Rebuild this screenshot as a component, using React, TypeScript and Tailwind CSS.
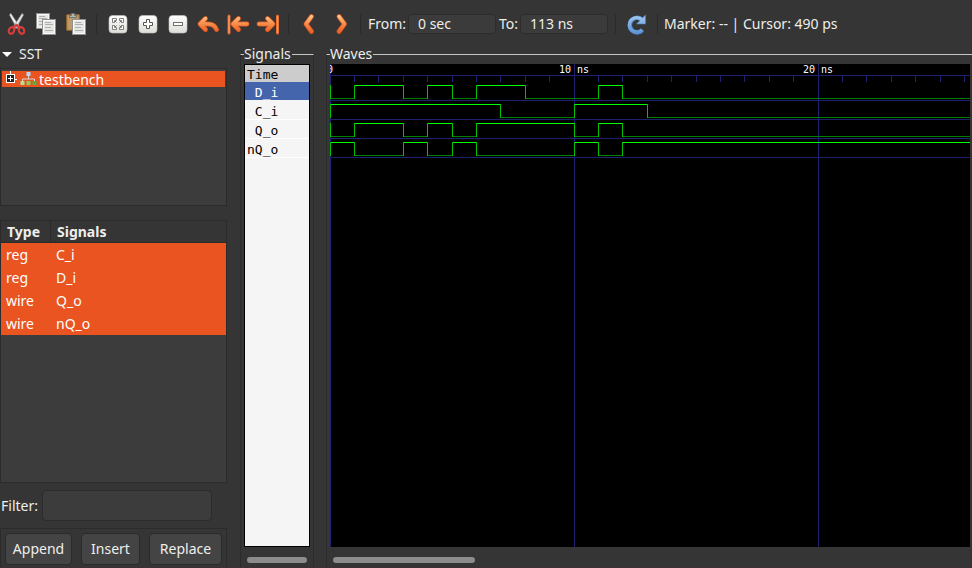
import { useEffect, useRef, useState, type ReactNode } from "react";

const NS = 24.4;
const END = 113;

type Signal = { name: string; type: string; start: 0 | 1; edges: number[] };

const traces: Signal[] = [
  { name: "D_i", type: "reg", start: 0, edges: [1, 3, 4, 5, 6, 8, 11, 12] },
  { name: "C_i", type: "reg", start: 1, edges: [7, 10, 13] },
  { name: "Q_o", type: "wire", start: 0, edges: [1, 3, 4, 5, 6, 10, 11, 12] },
  { name: "nQ_o", type: "wire", start: 1, edges: [1, 3, 4, 5, 6, 10, 11, 12] },
];

const facilities = [traces[1], traces[0], traces[2], traces[3]];

const at = (ns: number) => Math.floor(ns * NS);

function Gradients() {
  return (
    <svg className="absolute size-0" aria-hidden="true">
      <defs>
        <linearGradient id="orange" gradientUnits="userSpaceOnUse" x1="0" y1="4" x2="0" y2="21">
          <stop offset="0" stopColor="#ffc48a" />
          <stop offset="0.5" stopColor="#f58a48" />
          <stop offset="1" stopColor="#ec5a22" />
        </linearGradient>
        <linearGradient id="tile" x1="0" y1="0" x2="0" y2="1">
          <stop offset="0" stopColor="#ffffff" />
          <stop offset="1" stopColor="#dcdcd8" />
        </linearGradient>
        <linearGradient id="blue" gradientUnits="userSpaceOnUse" x1="0" y1="3" x2="0" y2="22">
          <stop offset="0" stopColor="#a4c8f0" />
          <stop offset="1" stopColor="#5a92d6" />
        </linearGradient>
      </defs>
    </svg>
  );
}

function Icon({ children }: { children: ReactNode }) {
  return (
    <svg viewBox="0 0 24 24" className="size-6" fill="none" aria-hidden="true">
      {children}
    </svg>
  );
}

function Arrow({ d }: { d: string }) {
  return (
    <g strokeLinecap="round" strokeLinejoin="round">
      <path d={d} stroke="#d9561f" strokeWidth="4.8" />
      <path d={d} stroke="url(#orange)" strokeWidth="3.4" />
    </g>
  );
}

function Page({ x, y }: { x: number; y: number }) {
  return (
    <g transform={`translate(${x} ${y})`}>
      <rect x="0.5" y="0.5" width="13" height="15" fill="#e6e6e4" stroke="#8f918d" />
      <rect x="1.5" y="1.5" width="11" height="13" stroke="#f8f8f8" />
      <path d="M3 3.5h6M3 5.5h8M3 8.5h6M3 11.5h8" stroke="#aeb0ac" />
    </g>
  );
}

function Tile({ children }: { children: ReactNode }) {
  return (
    <Icon>
      <rect x="3" y="3.5" width="18" height="17.5" rx="3.5" fill="url(#tile)" stroke="#c2c2be" strokeWidth="0.6" />
      {children}
    </Icon>
  );
}

function ToolButton({ label, children }: { label: string; children: ReactNode }) {
  return (
    <button type="button" aria-label={label} className="flex h-8 w-[30px] shrink-0 items-center justify-center">
      {children}
    </button>
  );
}

function Divider({ className }: { className: string }) {
  return <div className={`h-5 w-px shrink-0 bg-[#2a2a2a] ${className}`} />;
}

function Toolbar() {
  const field = "h-5 w-[88px] shrink-0 rounded-sm border border-[#2c2c2c] bg-[#3b3b3b] pl-[9px] outline-none";
  return (
    <header className="flex h-11 shrink-0 items-center overflow-hidden pt-1 pl-px whitespace-nowrap">
      <ToolButton label="Cut">
        <Icon>
          <path d="M5.600 3 6.800 1.400 15.400 14.400 13 16.400Z" fill="#f2f2f0" stroke="#a8aaa6" strokeWidth="0.700" />
          <path d="M19.400 3 18.200 1.400 9.600 14.400 12 16.400Z" fill="#e4e4e2" stroke="#a8aaa6" strokeWidth="0.700" />
          <path d="m9 16 3.500-3 3.500 3" stroke="#d63c3c" strokeWidth="2.400" strokeLinejoin="round" />
          <ellipse cx="7.500" cy="18.500" rx="2.600" ry="3.400" transform="rotate(24 7.500 18.500)" stroke="#d63c3c" strokeWidth="2.200" />
          <ellipse cx="17.500" cy="18.500" rx="2.600" ry="3.400" transform="rotate(-24 17.500 18.500)" stroke="#d63c3c" strokeWidth="2.200" />
        </Icon>
      </ToolButton>
      <ToolButton label="Copy">
        <Icon>
          <Page x={2} y={1} />
          <Page x={8} y={7} />
        </Icon>
      </ToolButton>
      <ToolButton label="Paste">
        <Icon>
          <rect x="2.500" y="2.500" width="13" height="16" rx="1" fill="#b78a50" stroke="#8a6330" />
          <rect x="4" y="4" width="10" height="13" fill="#c09a66" />
          <path d="M5.500 5.500V3.500H7.500V1.500h3v2h2v2Z" fill="#b4b6b2" stroke="#70726e" />
          <Page x={8} y={7} />
        </Icon>
      </ToolButton>
      <Divider className="ml-[5px] mr-1.5" />
      <ToolButton label="Zoom fit">
        <Tile>
          <path
            d="M6.500 10.500v-4h4v2h-2v2ZM17.500 10.500v-4h-4v2h2v2ZM6.500 13.500v4h4v-2h-2v-2ZM17.500 13.500v4h-4v-2h2v-2Z"
            fill="#fff"
            stroke="#70726e"
            strokeWidth="0.900"
          />
          <path d="m9 9 1.500 1.500M15 9l-1.500 1.500M9 15l1.500-1.500M15 15l-1.500-1.500" stroke="#70726e" />
        </Tile>
      </ToolButton>
      <ToolButton label="Zoom in">
        <Tile>
          <path d="M10.500 7.500h3v3h3v3h-3v3h-3v-3h-3v-3h3Z" fill="#fff" stroke="#555753" />
        </Tile>
      </ToolButton>
      <ToolButton label="Zoom out">
        <Tile>
          <rect x="7.500" y="10.500" width="9" height="3" fill="#fff" stroke="#70726e" />
        </Tile>
      </ToolButton>
      <ToolButton label="Zoom undo">
        <Icon>
          <Arrow d="M9.500 6.500 4 12l5.500 5.500M4.500 12H12c4 0 7 1.500 8.500 5.500" />
        </Icon>
      </ToolButton>
      <ToolButton label="Zoom to start">
        <Icon>
          <Arrow d="M12.500 6.500 7 12l5.500 5.500M7.500 12H21" />
          <path d="M3 4v17" stroke="#e2642c" strokeWidth="3" strokeLinecap="round" />
          <path d="M3 4v17" stroke="#fa9c60" strokeWidth="1.400" />
        </Icon>
      </ToolButton>
      <ToolButton label="Zoom to end">
        <Icon>
          <Arrow d="M11.500 6.500 17 12l-5.500 5.500M16.500 12H3" />
          <path d="M21.500 4v17" stroke="#e2642c" strokeWidth="3" strokeLinecap="round" />
          <path d="M21.500 4v17" stroke="#fa9c60" strokeWidth="1.400" />
        </Icon>
      </ToolButton>
      <Divider className="ml-[5px] mr-[5px]" />
      <ToolButton label="Previous edge">
        <Icon>
          <Arrow d="M14.500 4.500 9 12l5.500 7.500" />
        </Icon>
      </ToolButton>
      <div className="w-0.5 shrink-0" />
      <ToolButton label="Next edge">
        <Icon>
          <Arrow d="M10 4.500 15.500 12l-5.500 7.500" />
        </Icon>
      </ToolButton>
      <Divider className="ml-1 mr-[7px]" />
      <label htmlFor="from" className="w-10 shrink-0">From:</label>
      <input id="from" className={field} defaultValue="0 sec" />
      <label htmlFor="to" className="ml-[3px] w-[21px] shrink-0">To:</label>
      <input id="to" className={field} defaultValue="113 ns" />
      <Divider className="ml-[7px] mr-[5px]" />
      <ToolButton label="Reload">
        <Icon>
          <path d="M18.500 8.200A7.300 7.300 0 1 0 18.500 18" stroke="#4a7fc0" strokeWidth="4.600" />
          <path d="M21.500 3v9h-9l3.200-3.200 2-2Z" fill="url(#blue)" stroke="#4a7fc0" strokeWidth="0.600" />
          <path d="M18 8A7.300 7.300 0 1 0 18.200 17.700" stroke="url(#blue)" strokeWidth="3.400" />
        </Icon>
      </ToolButton>
      <Divider className="ml-1.5 mr-1.5" />
      <output>Marker: --&nbsp;| Cursor: 490 ps</output>
    </header>
  );
}

function SearchTree() {
  return (
    <>
      <button type="button" className="mb-1 flex h-5 shrink-0 items-center gap-[7px] pl-0.5">
        <svg viewBox="0 0 10 5" className="h-[5px] w-2.5" aria-hidden="true">
          <path d="M0 0h10L5 5Z" fill="#fff" />
        </svg>
        SST
      </button>
      <div className="h-[138px] shrink-0 border border-[#2b2b2b] bg-[#3c3c3c] p-px pt-0.5">
        <div role="tree" aria-label="SST">
          <div role="treeitem" aria-selected="true" className="flex h-4 items-start bg-[#e95420] pl-1 text-white">
            <svg viewBox="0 0 32 16" className="h-4 w-8 shrink-0" aria-hidden="true">
              <path d="M4.500 0v4M9 8.500h2" stroke="#fff" />
              <rect x="0.500" y="3.500" width="8" height="8" fill="#222" stroke="#fff" />
              <path d="M2 7.500h5M4.500 5v5" stroke="#fff" />
              <path d="M22.500 5v3M16.500 10V8h12v2" stroke="#d8d8d8" fill="none" />
              <rect x="20.500" y="1" width="4" height="4" fill="#b8d8f8" />
              <rect x="14.500" y="10" width="4" height="4" fill="#b6e08a" />
              <rect x="20.500" y="10" width="4" height="4" fill="#8ccc60" />
              <rect x="26.500" y="10" width="4" height="4" fill="#5cae3c" />
            </svg>
            <span className="pl-px leading-[18px]">testbench</span>
          </div>
        </div>
      </div>
    </>
  );
}

function FacilityTable() {
  return (
    <div className="mt-3.5 min-h-0 flex-1 overflow-hidden border border-[#2b2b2b] bg-[#3c3c3c]">
      <table className="w-full table-fixed border-separate border-spacing-0 text-left">
        <thead>
          <tr className="h-[22px] bg-[#353535]">
            <th className="w-[50px] border-r border-b border-[#2b2b2b] py-0 pl-1.5 font-bold">Type</th>
            <th className="border-b border-[#2b2b2b] py-0 pl-1.5 font-bold">Signals</th>
          </tr>
        </thead>
        <tbody>
          {facilities.map((s) => (
            <tr key={s.name} className="h-[23px] bg-[#e95420] text-white">
              <td className="py-0 pl-[5px]">{s.type}</td>
              <td className="py-0 pl-[5px]">{s.name}</td>
            </tr>
          ))}
        </tbody>
      </table>
    </div>
  );
}

function Actions() {
  const button = "h-8 rounded-sm border border-[#2a2a2a] bg-[#444444]";
  return (
    <>
      <div className="mt-[7px] flex shrink-0 items-center">
        <label htmlFor="filter" className="flex w-[38px] shrink-0 justify-end">Filter:</label>
        <input
          id="filter"
          className="mr-[15px] ml-1 h-[31px] min-w-0 flex-1 rounded-sm border border-[#2b2b2b] bg-[#3c3c3c] px-2 outline-none"
        />
      </div>
      <div className="mt-[7px] flex h-[39px] shrink-0 justify-between border border-b-0 border-[#2b2b2b] px-1 pt-1">
        <button type="button" className={`w-[67px] ${button}`}>Append</button>
        <button type="button" className={`w-[59px] ${button}`}>Insert</button>
        <button type="button" className={`w-[73px] ${button}`}>Replace</button>
      </div>
    </>
  );
}

function Frame({ title, className, children }: { title: string; className: string; children: ReactNode }) {
  return (
    <fieldset className={`flex min-w-0 flex-col border-t border-l border-t-[#c4c8c4] border-l-[#2b2b2b] pl-[3px] ${className}`}>
      <legend className="h-5 pr-px leading-5">{title}</legend>
      {children}
    </fieldset>
  );
}

function SignalNames() {
  return (
    <div className="min-h-0 flex-1 border border-black bg-[#f5f5f5] font-['DejaVu_Sans_Mono',monospace] text-[13px] text-black">
      <div className="h-[17px] bg-[#cccccc] pl-0.5 leading-5">Time</div>
      <ul>
        {traces.map((s, i) => (
          <li
            key={s.name}
            className={
              i === 0
                ? "h-[19px] border-b border-[#f5f5f5] bg-[#4464ac] pl-0.5 leading-[22px] whitespace-pre text-white"
                : "h-[19px] border-b border-white pl-0.5 leading-[22px] whitespace-pre"
            }
          >
            {s.name.padStart(4)}
          </li>
        ))}
      </ul>
    </div>
  );
}

function Trace({ signal, top }: { signal: Signal; top: number }) {
  const points = [0, ...signal.edges, END];
  const high = top + 0.5;
  const low = top + 13.5;
  return (
    <g shapeRendering="crispEdges">
      {points.slice(0, -1).map((from, i) => {
        const up = (signal.start + i) % 2 === 1;
        const y = up ? high : low;
        return (
          <g key={from}>
            <line x1={at(from)} x2={at(points[i + 1])} y1={y} y2={y} stroke={up ? "#00ff00" : "#008000"} />
            <line x1={at(from) + 0.5} x2={at(from) + 0.5} y1={top} y2={top + 14} stroke="#00c000" />
          </g>
        );
      })}
    </g>
  );
}

function WaveCanvas() {
  const box = useRef<HTMLDivElement>(null);
  const [width, setWidth] = useState(640);

  useEffect(() => {
    const el = box.current;
    if (!el) return;
    const observer = new ResizeObserver(() => setWidth(el.clientWidth));
    observer.observe(el);
    return () => observer.disconnect();
  }, []);

  const ticks = Array.from({ length: END }, (_, i) => i).filter((t) => at(t) < width);
  const majors = ticks.filter((t) => t % 10 === 0);
  return (
    <div ref={box} className="min-h-0 flex-1 overflow-hidden bg-black">
      <svg className="block h-full w-full" role="img" aria-label="Waves">
        <g stroke="#202070" shapeRendering="crispEdges">
          <line x1="0" x2="100%" y1="11.5" y2="11.5" />
          {ticks.map((t) => (
            <line key={t} x1={at(t) + 0.5} x2={at(t) + 0.5} y1="11" y2="18" />
          ))}
          {traces.map((s, i) => (
            <line key={s.name} x1="0" x2="100%" y1={36.5 + i * 19} y2={36.5 + i * 19} />
          ))}
          {majors.map((t) => (
            <line key={t} x1={at(t) + 0.5} x2={at(t) + 0.5} y1="0" y2="100%" />
          ))}
        </g>
        <g fill="#ffffff" className="font-['DejaVu_Sans_Mono',monospace] text-[10px]">
          {majors.map((t) =>
            t === 0 ? (
              <text key={t} x="-3" y="9">0</text>
            ) : (
              <text key={t} x={at(t) - 15} y="9">{`${t} ns`}</text>
            ),
          )}
        </g>
        {traces.map((s, i) => (
          <Trace key={s.name} signal={s} top={21 + i * 19} />
        ))}
      </svg>
    </div>
  );
}

function Scrollbar({ className }: { className: string }) {
  return (
    <div className="h-5 shrink-0 px-[3px] pt-2.5">
      <div className={`h-1.5 rounded-full bg-[#8c8c8c] ${className}`} />
    </div>
  );
}

export default function App() {
  return (
    <div className="flex h-screen flex-col overflow-hidden border-b border-[#3b3036] bg-[#353535] font-['Noto_Sans',sans-serif] text-sm text-[#eeeeec]">
      <Gradients />
      <Toolbar />
      <main className="flex min-h-0 flex-1">
        <aside className="flex w-[227px] shrink-0 flex-col overflow-hidden">
          <SearchTree />
          <FacilityTable />
          <Actions />
        </aside>
        <Frame title="Signals" className="ml-[13px] w-[74px] shrink-0 border-r border-r-[#2b2b2b] pr-[3px]">
          <SignalNames />
          <Scrollbar className="w-full" />
        </Frame>
        <Frame title="Waves" className="ml-3 flex-1 pr-0.5">
          <WaveCanvas />
          <Scrollbar className="w-[142px]" />
        </Frame>
      </main>
    </div>
  );
}
